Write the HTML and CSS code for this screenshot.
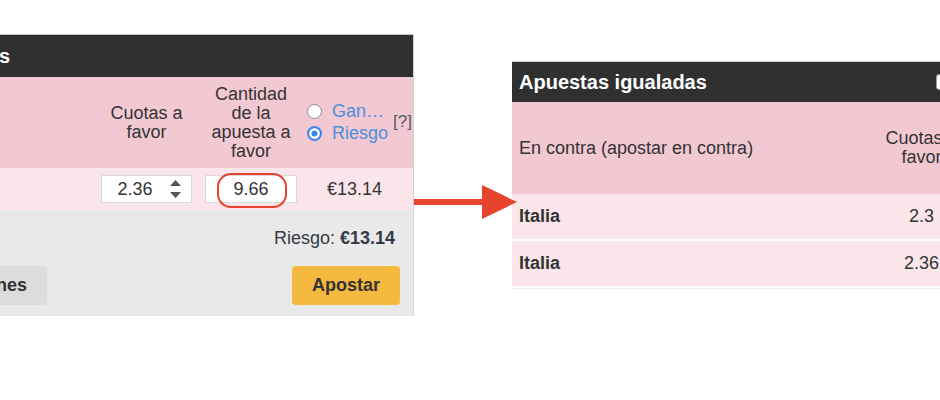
FILE: index.html
```html
<!DOCTYPE html>
<html lang="es">
<head>
<meta charset="UTF-8">
<meta name="viewport" content="width=device-width, initial-scale=1.0">
<title>Apuestas igualadas</title>
<link rel="stylesheet" href="styles.css">
</head>
<body>
    <div class="scene">
        <section class="slip">
            <div class="slip-sheet">
                <header class="bar">
                    <h2 class="bar-title">Apuestas</h2>
                </header>
                <div class="slip-grid slip-head">
                    <div class="cell"></div>
                    <div class="cell cell-center">Cuotas a favor</div>
                    <div class="cell cell-center">Cantidad de la apuesta a favor</div>
                    <div class="cell mode">
                        <div class="mode-opts">
                            <label class="opt"><input type="radio" name="mode"><span class="opt-text">Ganancia</span></label>
                            <label class="opt"><input type="radio" name="mode" checked><span class="opt-text">Riesgo</span></label>
                        </div>
                        <a class="help">[?]</a>
                    </div>
                </div>
                <div class="slip-grid slip-row">
                    <div class="cell cell-name">Italia</div>
                    <div class="cell">
                        <div class="field">
                            <span class="field-value">2.36</span>
                            <svg class="spinner" width="15" height="18" viewBox="0 0 15 18">
                                <path d="M7.5 0 L13 6 L2 6 Z" fill="#555"/>
                                <path d="M2 12 L13 12 L7.5 18 Z" fill="#555"/>
                            </svg>
                        </div>
                    </div>
                    <div class="cell">
                        <div class="field field-stake">
                            <span class="field-value">9.66</span>
                            <span class="mark"></span>
                        </div>
                    </div>
                    <div class="cell cell-result">€13.14</div>
                </div>
                <footer class="slip-foot">
                    <p class="summary">Riesgo: <b>€13.14</b></p>
                    <div class="actions">
                        <button class="btn">Opciones</button>
                        <button class="btn btn-primary">Apostar</button>
                    </div>
                </footer>
            </div>
        </section>

        <svg class="arrow" width="103" height="34" viewBox="0 0 103 34">
            <rect x="0" y="14" width="70" height="6" fill="#e8432c"/>
            <polygon points="68,0 103,17 68,34" fill="#e8432c"/>
        </svg>

        <section class="matched">
            <header class="bar matched-bar">
                <h2 class="bar-title">Apuestas igualadas</h2>
                <span class="check"></span>
            </header>
            <div class="matched-grid matched-head">
                <div class="cell cell-left">En contra (apostar en contra)</div>
                <div class="cell cell-center">Cuotas a favor</div>
            </div>
            <div class="matched-list">
                <div class="matched-grid matched-row">
                    <div class="cell cell-left"><b>Italia</b></div>
                    <div class="cell cell-center">2.3</div>
                </div>
                <div class="matched-grid matched-row">
                    <div class="cell cell-left"><b>Italia</b></div>
                    <div class="cell cell-center">2.36</div>
                </div>
            </div>
        </section>
    </div>
</body>
</html>
```

FILE: styles.css
```css
:root {
    --bar-bg: #303030;
    --head-bg: #f2c9d3;
    --row-bg: #fae6ea;
    --foot-bg: #e9e9e9;
    --text: #333;
    --link: #4a8fd8;
    --accent: #e8432c;
}
body {
    margin: 0;
    width: 940px;
    height: 400px;
    overflow: hidden;
    background: white;
    color: var(--text);
    font-family: "Liberation Sans", Arial, sans-serif;
    font-size: 18px;
}
.scene {
    display: flex;
    align-items: flex-start;
}

/* shared */
.bar {
    background: var(--bar-bg);
    display: flex;
    align-items: center;
    padding-left: 7px;
}
.bar-title {
    margin: 0;
    color: white;
    font-size: 20px;
    font-weight: bold;
}
.cell {
    line-height: 19px;
}
.cell-center {
    text-align: center;
}

/* left: bet slip */
.slip {
    flex-shrink: 0;
    margin-top: 34px;
    width: 414px;
    box-sizing: border-box;
    border-top: 1px solid #c9c9c9;
    border-right: 1px solid #d4d4d4;
    overflow: hidden;
}
.slip-sheet {
    width: 501px;
    margin-left: -88px;
}
.slip .bar {
    height: 42px;
    padding-left: 8px;
}
.slip-grid {
    display: grid;
    grid-template-columns: 182px 105px 104px 110px;
    align-items: center;
}
.slip-head {
    background: var(--head-bg);
    height: 91px;
}
.slip-head .cell-center {
    padding: 0 5px;
}
.slip-row {
    background: var(--row-bg);
    height: 42px;
}
.cell-name {
    padding-left: 8px;
    font-weight: bold;
}
.mode {
    display: flex;
    align-items: center;
    gap: 3px;
    padding-left: 4px;
}
.mode-opts {
    display: flex;
    flex-direction: column;
}
.opt {
    display: flex;
    align-items: center;
    gap: 10px;
    height: 22px;
}
.opt input {
    appearance: none;
    margin: 0;
    width: 15px;
    height: 15px;
    flex-shrink: 0;
    box-sizing: border-box;
    border: 1px solid #8c8c8c;
    border-radius: 50%;
    background: white;
}
.opt input:checked {
    border: 2px solid #3a84f3;
    background: #3a84f3;
    box-shadow: inset 0 0 0 2.5px white;
}
.opt-text {
    display: block;
    width: 58px;
    color: var(--link);
    white-space: nowrap;
    overflow: hidden;
    text-overflow: ellipsis;
}
.help {
    margin-bottom: 3px;
    color: #505a67;
    font-size: 17px;
}
.field {
    position: relative;
    display: flex;
    align-items: center;
    width: 91px;
    height: 28px;
    margin: 0 auto;
    box-sizing: border-box;
    border: 1px solid #dadada;
    background: white;
}
.field-value {
    flex: 1;
    text-align: center;
}
.spinner {
    margin-right: 8px;
}
.field-stake {
    width: 92px;
}
.mark {
    position: absolute;
    left: 11px;
    top: -3px;
    width: 70px;
    height: 35px;
    box-sizing: border-box;
    border: 2.5px solid var(--accent);
    border-radius: 14px;
}
.cell-result {
    padding-left: 24px;
}
.slip-foot {
    background: var(--foot-bg);
    padding: 18px 13px 11px;
}
.summary {
    margin: 0 5px 17px 0;
    text-align: right;
    line-height: 21px;
    color: #333b46;
}
.actions {
    display: flex;
    justify-content: space-between;
}
.btn {
    height: 39px;
    padding: 0 20px;
    border: none;
    border-radius: 4px;
    background: #dcdcdc;
    color: var(--text);
    font-family: inherit;
    font-size: 18px;
    font-weight: bold;
}
.btn-primary {
    background: #f5b93f;
}

/* arrow annotation */
.arrow {
    flex-shrink: 0;
    margin-top: 185px;
    margin-right: -5px;
    position: relative;
    z-index: 1;
}

/* right: matched bets */
.matched {
    flex-shrink: 0;
    margin-top: 61px;
    width: 460px;
    border-top: 1px solid #cccccc;
}
.matched-bar {
    height: 40px;
    justify-content: space-between;
    padding-right: 20px;
}
.check {
    width: 16px;
    height: 16px;
    box-sizing: border-box;
    border: 1px solid #999;
    border-radius: 3px;
    background: white;
}
.matched-grid {
    display: grid;
    grid-template-columns: 359px 1fr;
    align-items: center;
}
.matched-head {
    background: var(--head-bg);
    height: 92px;
}
.cell-left {
    padding-left: 7px;
}
.matched-list {
    border-bottom: 1px solid #ececec;
}
.matched-row {
    background: var(--row-bg);
    height: 45px;
    border-bottom: 2px solid white;
}
```
